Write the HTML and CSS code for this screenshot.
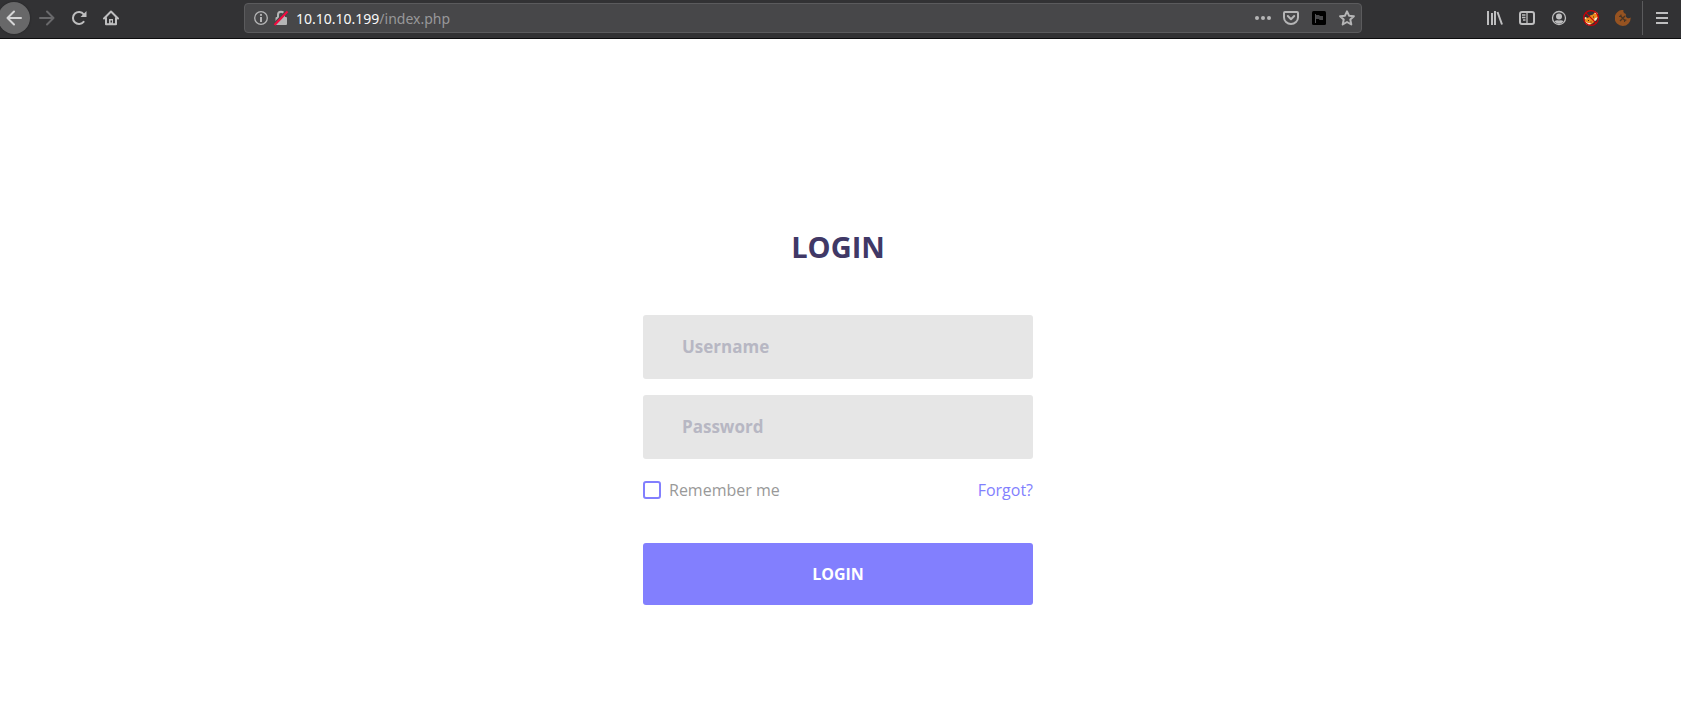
FILE: index.html
```html
<!DOCTYPE html>
<html lang="en">
<head>
<meta charset="utf-8">
<meta name="viewport" content="width=device-width, initial-scale=1">
<title>Login</title>
<link rel="stylesheet" href="styles.css">
</head>
<body>
<header class="toolbar">
  <nav class="nav-buttons" aria-label="Navigation">
    <button class="tool back" type="button" aria-label="Back"><svg class="icon" viewBox="0 0 16 16"><path d="M15 8H1.500M8 1.500L1.500 8L8 14.500" class="line"/></svg></button>
    <button class="tool dim" type="button" aria-label="Forward"><svg class="icon" viewBox="0 0 16 16"><path d="M1 8H14.500M8 1.500L14.500 8L8 14.500" class="line"/></svg></button>
    <button class="tool" type="button" aria-label="Reload"><svg class="icon" viewBox="0 0 16 16"><path d="M12.600 11.800A6 6 0 1 1 12.700 4.300" class="line"/><path d="M15.500 1V7H9.500Z" class="fill"/></svg></button>
    <button class="tool" type="button" aria-label="Home"><svg class="icon" viewBox="0 0 16 16"><path d="M1 8.500L8 1.500L15 8.500M3 7.500V14.200H13V7.500" class="line"/><path d="M6 9h4v5H6z" class="fill"/><path d="M7.500 10.500h1.500v2H7.500z" fill="#323234"/></svg></button>
  </nav>
  <div class="urlbar">
    <button class="info" type="button" aria-label="Site information">
      <svg class="icon" viewBox="0 0 16 16"><circle cx="8" cy="8" r="6.300" class="thin"/><circle cx="8" cy="4.900" r="1.100" class="fill"/><path d="M7 7h2v5H7z" class="fill"/></svg>
    </button>
    <button class="lock" type="button" aria-label="Connection is not secure">
      <svg class="icon" viewBox="0 0 16 16"><path d="M5 8V4.800a3 3 0 0 1 6 0V8" class="line"/><rect x="2.500" y="7" width="11.500" height="8" rx="1" class="fill"/><path d="M1 14.500L13.500 1.500" stroke="#474749" stroke-width="3"/><path d="M1.500 15L14.500 1.500" stroke="#f5083f" stroke-width="2"/></svg>
    </button>
    <div class="address"><span class="host">10.10.10.199</span>/index.php</div>
    <button class="action" type="button" aria-label="Page actions"><svg class="icon" viewBox="0 0 16 16"><circle cx="2" cy="8" r="2" class="fill"/><circle cx="8" cy="8" r="2" class="fill"/><circle cx="14" cy="8" r="2" class="fill"/></svg></button>
    <button class="action" type="button" aria-label="Save to Pocket"><svg class="icon" viewBox="0 0 16 16"><path d="M2 2H14Q15 2 15 3V7.500A7 6.500 0 0 1 1 7.500V3Q1 2 2 2Z" class="line"/><path d="M4.800 6L8 9.200L11.200 6" class="line"/></svg></button>
    <button class="action" type="button" aria-label="Flag"><svg class="icon" viewBox="0 0 16 16"><rect x="1" y="1" width="14" height="14" rx="1.500" fill="#000"/><path d="M4 4h1v9H4z" fill="#555557"/><path d="M5 5H8L9 6H12V10H8.500L8 9H5Z" fill="#48484a"/></svg></button>
    <button class="action" type="button" aria-label="Bookmark"><svg class="icon" viewBox="0 0 16 16"><path d="M8 1.300L10 5.700L14.900 6.200L11.300 9.600L12.300 14.500L8 12L3.700 14.500L4.700 9.600L1.100 6.200L6 5.700Z" class="line"/></svg></button>
  </div>
  <div class="extras">
    <button class="tool" type="button" aria-label="Library"><svg class="icon" viewBox="0 0 16 16"><path d="M1 1V15M5 3V15M8 1V15M10.500 2L15 14.500" class="line flat"/></svg></button>
    <button class="tool" type="button" aria-label="Sidebars"><svg class="icon" viewBox="0 0 16 16"><rect x="1" y="2" width="14" height="12" rx="2" class="line"/><path d="M8 2V14M3 5H6.500M3 7.500H6.500M4 10H6.500" class="thin"/></svg></button>
    <button class="tool" type="button" aria-label="Account"><svg class="icon" viewBox="0 0 16 16"><circle cx="8" cy="8" r="6.500" class="thin"/><circle cx="8" cy="6.500" r="3" class="fill"/><path d="M3.500 11.500Q5 9.500 8 10.500Q11 9.500 12.500 11.500Q8 16 3.500 11.500Z" class="fill"/></svg></button>
    <button class="tool" type="button" aria-label="FoxyProxy"><svg class="icon" viewBox="0 0 16 16"><path d="M1.500 9L2.500 7L5 8L7 5.500L10 4.500L12 2L14.500 3L15 7L13 10L10 13L7 15L4 14.500L2 12Z" fill="#ea8a1c"/><path d="M1 8L3 7L3.500 9.500ZM11.500 4L12.500 1.500L15 3.500ZM2 11.500L5 13L8 13L6 15.500L3 14ZM12 8L15 7L13 10.500L10.500 11Z" fill="#f4e4d0"/><path d="M5 10.500H6M10 7H11M7.500 12H8.500" stroke="#412014"/><circle cx="8" cy="8" r="7.400" fill="none" stroke="#c90009" stroke-width="1.200"/><path d="M2.800 2.800L13.200 13.200" stroke="#c90009" stroke-width="1.200"/></svg></button>
    <button class="tool" type="button" aria-label="Cookie editor"><svg class="icon" viewBox="0 0 16 16"><path d="M8.500 0A3 3 0 0 0 11 4A3 3 0 0 0 15.700 7.500A8 8 0 1 1 8.500 0Z" fill="#965321"/><path d="M5 5.500L10.500 11M10 6L5 11" stroke="#4a3524" stroke-width="1.300"/><path d="M4 6.500H6V4.500M9.500 12V10H11.500" fill="none" stroke="#4a3524"/></svg></button>
    <button class="tool menu" type="button" aria-label="Open menu"><svg class="icon" viewBox="0 0 16 16"><path d="M2 3H14M2 8H14M2 13H14" class="line flat"/></svg></button>
  </div>
</header>
<main class="page">
  <form class="login">
    <h1 class="title">LOGIN</h1>
    <input class="field" type="text" placeholder="Username" aria-label="Username">
    <input class="field" type="password" placeholder="Password" aria-label="Password">
    <div class="options">
      <label class="remember"><input class="check" type="checkbox">Remember me</label>
      <a class="forgot" href="#">Forgot?</a>
    </div>
    <button class="submit" type="submit">LOGIN</button>
  </form>
</main>
</body>
</html>
```
FILE: styles.css
```css
* { box-sizing: border-box; }

body {
  margin: 0;
  min-height: 100vh;
  display: flex;
  flex-direction: column;
  background: #fff;
  font-family: "Open Sans", "Noto Sans", sans-serif;
}

button, input { font-family: inherit; }

.toolbar {
  display: flex;
  align-items: center;
  padding: 3px 0 5px;
  background: #323234;
  border-bottom: 1px solid #0c0c0d;
  color: #bebebf;
}

.nav-buttons, .extras { display: flex; align-items: center; }
.nav-buttons { margin-left: -2px; }

.tool, .info, .lock, .action {
  display: flex;
  align-items: center;
  justify-content: center;
  flex: none;
  padding: 0;
  border: 0;
  background: none;
  color: inherit;
}

.tool { width: 32px; height: 30px; }
.back { height: 32px; margin: -1px 1px -1px 0; border-radius: 50%; background: #686869; color: #d6d6d7; box-shadow: 0 0 2px #202022; }
.dim { color: #69696b; }

.icon { display: block; width: 16px; height: 16px; }
.line { fill: none; stroke: currentColor; stroke-width: 2; stroke-linecap: round; stroke-linejoin: round; }
.flat { stroke-linecap: butt; }
.thin { fill: none; stroke: currentColor; stroke-width: 1.3; }
.fill { fill: currentColor; }

.urlbar {
  flex: 1;
  min-width: 0;
  height: 30px;
  margin: 0 117px;
  padding: 0 0 0 8px;
  display: flex;
  align-items: center;
  border: 1px solid #5b5b5d;
  border-radius: 4px;
  background: #474749;
  color: #b5b5b6;
}

.info { width: 16px; }
.lock { width: 16px; margin: 0 7px 0 4px; }
.action { width: 28px; height: 28px; }

.address {
  flex: 1;
  min-width: 0;
  overflow: hidden;
  white-space: nowrap;
  font-family: "Noto Sans", "Open Sans", sans-serif;
  font-size: 14px;
  line-height: 26px;
  padding-top: 2px;
  color: #98989a;
}
.host { color: #f9f9fa; }

.extras { align-self: stretch; }
.menu {
  width: 39px;
  height: 34px;
  margin: -2px 0 -2px 3px;
  border-left: 1px solid #5b5b5d;
}

.page {
  flex: 1;
  display: flex;
  align-items: center;
  justify-content: center;
  padding: 66px 5px 0 0;
}

.login {
  width: 390px;
  max-width: 100%;
  display: flex;
  flex-direction: column;
  gap: 16px;
}

.title {
  margin: 0 0 34px;
  font-size: 29px;
  line-height: 36px;
  font-weight: 700;
  text-align: center;
  color: #403866;
}

.field {
  width: 100%;
  height: 64px;
  padding: 0 39px;
  border: 0;
  border-radius: 3px;
  background: #e6e6e6;
  font-size: 17px;
  font-weight: 700;
  color: #403866;
}
.field::placeholder { color: #b7b7c3; opacity: 1; }

.options {
  display: flex;
  justify-content: space-between;
  align-items: center;
  padding: 3px 0 25px;
  font-size: 16px;
  line-height: 24px;
}

.remember { display: flex; align-items: center; gap: 8px; color: #999; }

.check {
  appearance: none;
  width: 18px;
  height: 18px;
  margin: 0;
  border: 2px solid #827ffe;
  border-radius: 3px;
  background: #fff;
}
.check:checked { background: #827ffe; }

.forgot { color: #827ffe; text-decoration: none; }

.submit {
  height: 62px;
  border: 0;
  border-radius: 3px;
  background: #827ffe;
  font-size: 16px;
  font-weight: 700;
  color: #fff;
}
```
